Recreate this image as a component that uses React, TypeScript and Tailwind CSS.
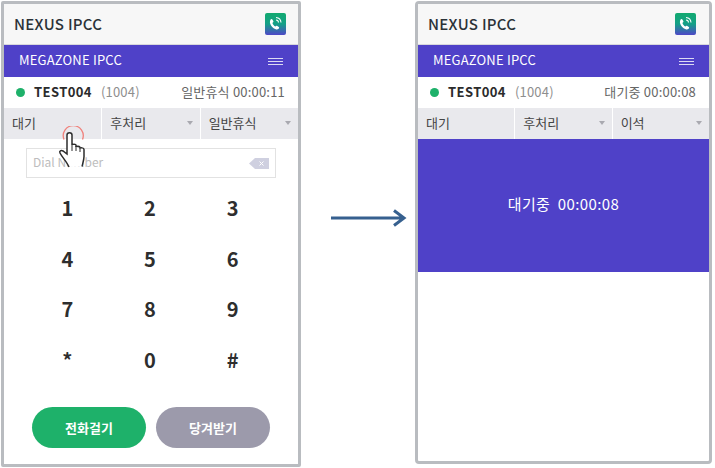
import {Fragment} from 'react';

const FONT = "font-['Noto_Sans_CJK_KR','Noto_Sans',sans-serif]";
const KEYS = ['1', '2', '3', '4', '5', '6', '7', '8', '9', '*', '0', '#'];

function PhoneLogo({id}: {id: string}) {
    return (
        <svg width="21" height="22" viewBox="0 0 21 22" className="block">
            <defs>
                <linearGradient id={id} x1="0" y1="0" x2="0" y2="1">
                    <stop offset="0" stopColor="#12a96f"/>
                    <stop offset="0.5" stopColor="#14a087"/>
                    <stop offset="1" stopColor="#4f47c8"/>
                </linearGradient>
            </defs>
            <rect width="21" height="22" rx="2" fill={`url(#${id})`}/>
            <path
                d="M5.600 6.600c.6-.6 1.300-.7 1.700-.1l1 1.600c.3.4.2.9-.2 1.200l-.7.6c.4 1.400 1.600 2.900 3 3.600l.7-.6c.4-.3.9-.3 1.200 0l1.500 1.200c.5.4.4 1.100-.2 1.600-.8.8-1.800 1-2.900.6-3-1.200-5-3.700-5.700-6.400-.2-1.200.1-2.100.6-3.300z"
                fill="#fff"/>
            <path d="M11 4.500c2.600.2 4.800 2.300 5 5M11 7c1.300.1 2.400 1.200 2.500 2.500" fill="none" stroke="#fff" strokeWidth="1.100"/>
        </svg>
    );
}

function Hamburger() {
    return (
        <div className="flex w-[15px] flex-col gap-[2px]">
            <span className="h-[1px] bg-[#dcdaf3]"/>
            <span className="h-[1px] bg-[#dcdaf3]"/>
            <span className="h-[1px] bg-[#dcdaf3]"/>
        </div>
    );
}

function Caret() {
    return <span className="h-0 w-0 border-x-[3.500px] border-t-[4px] border-x-transparent border-t-[#a9a9b0]"/>;
}

function Header({logoId, logoPad}: {logoId: string; logoPad: string}) {
    return (
        <>
            <div className={`flex h-[40px] items-center justify-between bg-[#f7f7f7] pl-[10px] ${logoPad}`}>
                <span className="text-[15px] font-medium tracking-[0.3px] text-[#2b3238]">NEXUS IPCC</span>
                <PhoneLogo id={logoId}/>
            </div>
            <div className="flex h-[33px] items-center justify-between border-t border-t-[#d8d8dc] bg-[#4f41c8] pl-[15px] pr-[15px]">
                <span className="pb-[3px] text-[13px] tracking-[0.2px] text-white">MEGAZONE IPCC</span>
                <Hamburger/>
            </div>
        </>
    );
}

function StatusRow({status}: {status: string}) {
    return (
        <div className="flex h-[31px] items-center justify-between bg-white pl-[12px] pr-[13px] text-[13px] tracking-[0.2px]">
            <div className="flex items-center">
                <span className="mr-[9px] h-[9px] w-[9px] rounded-full bg-[#1eb16a]"/>
                <span className="pb-[1px] font-bold tracking-[0.4px] text-[#2b2b2b]">TEST004</span>
                <span className="ml-[9px] pb-[1px] text-[#8e8e8e]">(1004)</span>
            </div>
            <span className="pb-[1px] text-[#666]">{status}</span>
        </div>
    );
}

function Tabs({last}: {last: string}) {
    return (
        <div className="grid h-[31px] grid-cols-3 gap-x-[1px] pb-0 text-[13px] text-[#444]">
            <div className="flex items-center bg-[#e9e9ed] pb-[2px] pl-[8px]">대기</div>
            {['후처리', last].map((t) => (
                <div key={t} className="flex items-center justify-between bg-[#e9e9ed] pb-[2px] pl-[8px] pr-[7px]">
                    {t}
                    <Caret/>
                </div>
            ))}
        </div>
    );
}

function HandCursor() {
    return (
        <svg width="30" height="44" viewBox="0 0 30 44" className="absolute left-[54px] top-[122px]">
            <path d="M6 13.500a10 10 0 1 1 18.500 0" fill="none" stroke="#f0817b" strokeWidth="1.300"/>
            <path
                d="M11 41c-2-5-7-10-9-14-1-2 1-3 3-2l4 3V9c0-3 5-3 5 0v10c0-1 4-1 4 0v2c0-1 4-1 4 .5v1c0-1 4-1 4 1v7c0 3-1 6-2 10"
                fill="#fff" stroke="#2c2c2c" strokeWidth="1.500"/>
            <path d="M14 19v6M18 20v5M22 22v4" stroke="#2c2c2c" strokeWidth="1"/>
        </svg>
    );
}

export default function App() {
    return (
        <div className={`${FONT} flex h-[468px] w-[715px] items-start overflow-hidden bg-white pl-[1px] pt-[1px]`}>
            <div className="relative h-[466px] w-[300px] shrink-0 rounded-[2px] border-[3px] border-[#b9bcc0] bg-white">
                <Header logoId="logoA" logoPad="pr-[12px]"/>
                <StatusRow status="일반휴식 00:00:11"/>
                <Tabs last="일반휴식"/>
                <div className="mx-[22px] mt-[9px] flex h-[30px] items-center justify-between border border-[#e2e2e2] pl-[6px] pr-[6px] pb-[2px] text-[12px] text-[#bdbdbd]">
                    Dial Number
                    <svg width="20" height="11" viewBox="0 0 20 11" className="mt-[2px]">
                        <path d="M6 0h14v11H6L0 5.500z" fill="#cfd0e0"/>
                        <path d="M10.500 3.500l4 4M14.500 3.500l-4 4" stroke="#fff" strokeWidth="1"/>
                    </svg>
                </div>
                <div className="ml-[22px] mt-[5px] grid w-[248px] grid-cols-3 text-[20px] font-bold text-[#2e2e2e]">
                    {KEYS.map((k) => (
                        <Fragment key={k}>
                            <div className="flex h-[50.500px] items-center justify-center">{k}</div>
                        </Fragment>
                    ))}
                </div>
                <div className="mt-[22px] flex justify-center gap-[10px] text-[13px] font-bold text-white">
                    <div className="flex h-[41px] w-[114px] items-center justify-center rounded-full bg-[#1eb16a]">전화걸기</div>
                    <div className="flex h-[41px] w-[114px] items-center justify-center rounded-full bg-[#9c9aab]">당겨받기</div>
                </div>
                <HandCursor/>
            </div>

            <svg width="76" height="20" viewBox="0 0 76 20" className="ml-[30px] mt-[207px] shrink-0">
                <path d="M0 10h72M63 2.500l10 7.500-10 7.500" fill="none" stroke="#36608f" strokeWidth="3"/>
            </svg>

            <div className="ml-[8px] h-[463px] w-[297px] shrink-0 rounded-[4px] border-[3px] border-[#b9bcc0] bg-white">
                <Header logoId="logoB" logoPad="pr-[13px]"/>
                <StatusRow status="대기중 00:00:08"/>
                <Tabs last="이석"/>
                <div className="flex h-[133px] items-center justify-center bg-[#4f41c8] pb-[3px] text-[15px] tracking-[0.4px] text-white">대기중&nbsp; 00:00:08</div>
            </div>
        </div>
    );
}
